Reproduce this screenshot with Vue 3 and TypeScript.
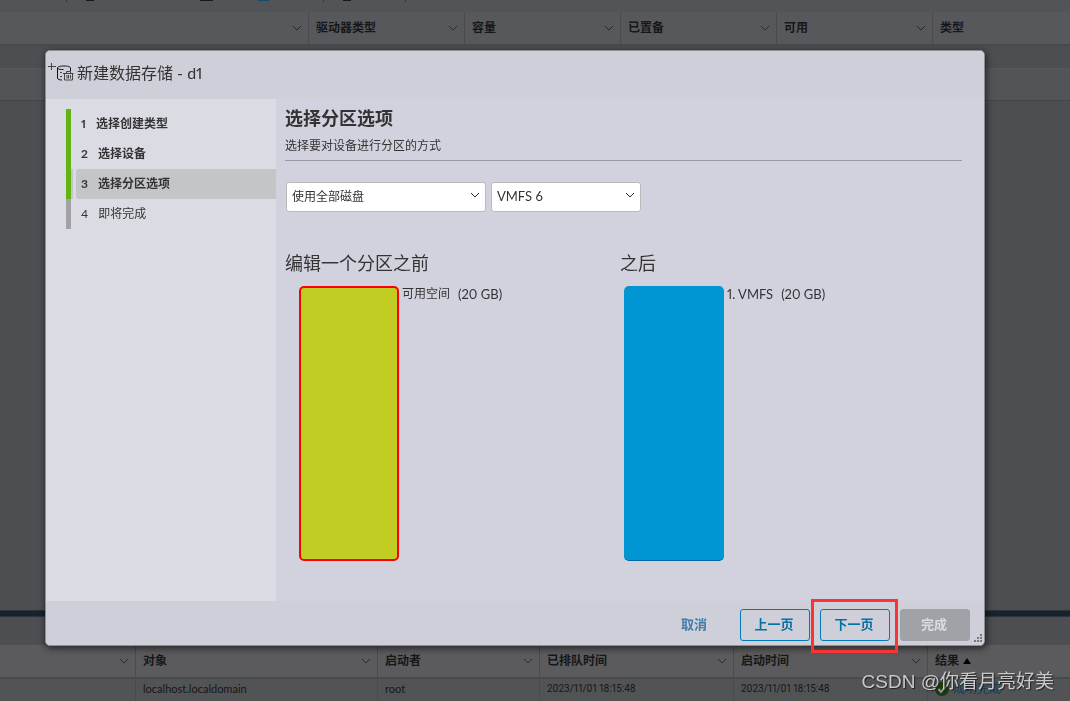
<script setup lang="ts">
import { ref } from 'vue'

interface Column {
  label: string
  width: string
}

interface Step {
  id: number
  label: string
  state: 'done' | 'current' | 'pending'
}

const storageColumns: Column[] = [
  { label: '', width: '309px' },
  { label: '驱动器类型', width: '156px' },
  { label: '容量', width: '156px' },
  { label: '已置备', width: '156px' },
  { label: '可用', width: '156px' },
  { label: '类型', width: 'auto' },
]

const taskColumns: Column[] = [
  { label: '', width: '136px' },
  { label: '对象', width: '242px' },
  { label: '启动者', width: '162px' },
  { label: '已排队时间', width: '194px' },
  { label: '启动时间', width: '194px' },
  { label: '结果', width: 'auto' },
]

const steps: Step[] = [
  { id: 1, label: '选择创建类型', state: 'done' },
  { id: 2, label: '选择设备', state: 'done' },
  { id: 3, label: '选择分区选项', state: 'current' },
  { id: 4, label: '即将完成', state: 'pending' },
]

const scheme = ref('full')
const version = ref('VMFS 6')
</script>

<template>
  <div class="page">
    <div class="toolbar-edge">
      <i class="sep"></i><i class="dot"></i><i class="dot wide"></i><i class="dot blue"></i><i class="sep"></i><i class="dot"></i><i class="sep"></i>
    </div>
    <table class="grid storage">
      <colgroup>
        <col v-for="(c, i) in storageColumns" :key="i" :style="{ width: c.width }" />
      </colgroup>
      <thead>
        <tr>
          <th v-for="(c, i) in storageColumns" :key="i" scope="col">
            <div class="head">
              <span>{{ c.label }}</span>
              <svg v-if="i < storageColumns.length - 1" class="chev" viewBox="0 0 10 6"><path d="M1 1l4 4 4-4" /></svg>
            </div>
          </th>
        </tr>
      </thead>
      <tbody>
        <tr class="filter"><td v-for="(c, i) in storageColumns" :key="i"></td></tr>
        <tr class="entry"><td v-for="(c, i) in storageColumns" :key="i"></td></tr>
      </tbody>
    </table>
    <div class="fill"></div>
    <div class="splitter"></div>
    <div class="task-bar"></div>
    <table class="grid tasks">
      <colgroup>
        <col v-for="(c, i) in taskColumns" :key="i" :style="{ width: c.width }" />
      </colgroup>
      <thead>
        <tr>
          <th v-for="(c, i) in taskColumns" :key="i" scope="col">
            <div class="head">
              <span>{{ c.label }}</span>
              <svg v-if="i < taskColumns.length - 1" class="chev" viewBox="0 0 10 6"><path d="M1 1l4 4 4-4" /></svg>
              <svg v-else class="sorted" viewBox="0 0 8 8"><path d="M4 1l4 6H0z" /></svg>
            </div>
          </th>
        </tr>
      </thead>
      <tbody>
        <tr>
          <td></td>
          <td>localhost.localdomain</td>
          <td>root</td>
          <td class="date">2023/11/01 18:15:48</td>
          <td class="date">2023/11/01 18:15:48</td>
          <td>
            <div class="result">
              <svg viewBox="0 0 14 14"><circle cx="7" cy="7" r="7" /><path d="M3.5 7l2.5 3 4.500-5.500" /></svg>
              <a href="#">成功完成</a>
            </div>
          </td>
        </tr>
      </tbody>
    </table>
  </div>

  <div class="overlay">
    <section class="dialog" role="dialog" aria-labelledby="dialog-title">
      <header class="title-bar">
        <svg class="store-icon" viewBox="0 0 26 20">
          <path d="M0 5.500h8M3.500 2v7" />
          <path class="dark" d="M22.500 10V7c0-1.500-3-2-6.500-2s-6.500.5-6.500 2v10c0 1.500 2 2 4.500 2M9.500 7c1 1.500 3 1.500 6 1.500" />
          <path d="M12 11.500h2M12 15.500h2" />
          <path d="M15 12.500h10.500M16.500 12.500v6.500h8v-6.500M19 14v3.500M20.500 14v3.500M22.500 14v3.500M18.500 12v-1.500h4V12" />
        </svg>
        <h1 id="dialog-title">新建数据存储 - d1</h1>
      </header>

      <div class="body">
        <nav class="steps">
          <ol>
            <li v-for="s in steps" :key="s.id" :class="s.state">
              <button type="button"><span class="num">{{ s.id }}</span>{{ s.label }}</button>
            </li>
          </ol>
        </nav>

        <main class="content">
          <h2>选择分区选项</h2>
          <p class="lead">选择要对设备进行分区的方式</p>
          <div class="choices">
            <div class="select wide">
              <select v-model="scheme" aria-label="分区方式">
                <option value="full">使用全部磁盘</option>
              </select>
              <svg class="chev" viewBox="0 0 10 6"><path d="M1 1l4 4 4-4" /></svg>
            </div>
            <div class="select">
              <select v-model="version" class="latin" aria-label="VMFS 版本">
                <option>VMFS 6</option>
              </select>
              <svg class="chev" viewBox="0 0 10 6"><path d="M1 1l4 4 4-4" /></svg>
            </div>
          </div>
          <div class="layouts">
            <section>
              <h3>编辑一个分区之前</h3>
              <div class="disk before">
                <div class="block free"></div>
                <span class="name">可用空间</span><span class="latin">(20 GB)</span>
              </div>
            </section>
            <section>
              <h3>之后</h3>
              <div class="disk">
                <div class="block vmfs"></div>
                <span class="name latin">1. VMFS</span><span class="latin">(20 GB)</span>
              </div>
            </section>
          </div>
        </main>
      </div>

      <footer class="actions">
        <button type="button" class="btn link">取消</button>
        <button type="button" class="btn">上一页</button>
        <div class="marked"><button type="button" class="btn">下一页</button></div>
        <button type="button" class="btn done" disabled>完成</button>
        <svg class="grip" viewBox="0 0 8 8">
          <path d="M6 0h2v2H6zM3 3h2v2H3zM6 3h2v2H6zM0 6h2v2H0zM3 6h2v2H3zM6 6h2v2H6z" />
        </svg>
      </footer>
    </section>
  </div>

  <div class="watermark">CSDN @你看月亮好美</div>
</template>

<style>
body {
  margin: 0;
  overflow: hidden;
}
</style>

<style scoped>
.page,
.overlay,
.watermark,
button,
select {
  font-family: Lato, "Noto Sans CJK SC", sans-serif;
  font-variant-numeric: proportional-nums;
}
.page {
  display: flex;
  flex-direction: column;
  height: 100vh;
  background: #4d4e52;
  color: #161718;
  font-size: 12px;
}
.toolbar-edge {
  display: flex;
  align-items: flex-start;
  height: 12px;
  padding-left: 66px;
  background: #535458;
}
.sep {
  width: 1px;
  height: 2px;
  background: #37383a;
}
.dot {
  width: 8px;
  height: 1px;
  margin: 0 54px 0 19px;
  background: #18191a;
}
.dot.wide {
  width: 13px;
  margin-left: 52px;
  margin-right: 26px;
}
.dot.blue {
  width: 11px;
  background: #164c68;
}
.grid {
  width: 100%;
  table-layout: fixed;
  border-collapse: separate;
  border-spacing: 0;
}
th,
td {
  box-sizing: border-box;
  padding: 0 6px 0 7px;
  border-right: 1px solid #4a4b4d;
  text-align: left;
}
th:last-child,
td:last-child {
  border-right: 0;
}
th {
  height: 34px;
  background: #57585b;
  border-bottom: 2px solid #494a4d;
  font-weight: 700;
}
.head {
  display: flex;
  align-items: center;
  justify-content: space-between;
  line-height: 18px;
}
.chev {
  width: 10px;
  height: 6px;
  fill: none;
  stroke: #2a2b2c;
}
.filter td {
  height: 22px;
}
.entry td {
  height: 33px;
  border-right-color: transparent;
  border-top: 1px solid #57585b;
  border-bottom: 1px solid #444548;
  background: #535458;
}
.fill {
  flex: 1;
}
.splitter {
  height: 5px;
  border-top: 1px solid #2d3336;
  border-bottom: 1px solid #2d3336;
  background: #15242c;
}
.task-bar {
  height: 28px;
}
.tasks th {
  background: #5b5b5d;
}
.tasks th:last-child .head {
  justify-content: flex-start;
  gap: 4px;
}
.sorted {
  width: 8px;
  height: 8px;
}
.tasks td {
  height: 22px;
  padding-bottom: 3px;
  background: #525355;
  font-size: 11px;
  line-height: 18px;
}
.tasks .date {
  font-family: Roboto, sans-serif;
  font-size: 10px;
}
.result {
  display: flex;
  align-items: center;
  gap: 4px;
}
.result svg {
  width: 14px;
  height: 14px;
  fill: #173b0c;
}
.result path {
  fill: none;
  stroke: #8b928a;
  stroke-width: 2;
}
.result a {
  color: #143f58;
  font-size: 12px;
  text-decoration: none;
}

.overlay {
  position: fixed;
  inset: 0;
  display: flex;
  box-sizing: border-box;
  padding: 50px 85px 55px 45px;
  color: #333;
  font-size: 12px;
}
.dialog {
  display: flex;
  flex: 1;
  flex-direction: column;
  border: 1px solid #8e8e92;
  border-radius: 5px;
  background: #d2d2de;
  box-shadow: 1px 2px 6px 1px rgba(0, 0, 0, 0.5);
}
.title-bar {
  display: flex;
  align-items: flex-start;
  gap: 5px;
  height: 38px;
  padding: 10px 0 0 2px;
  border-radius: 4px 4px 0 0;
  background: #cfcfd9;
}
.store-icon {
  width: 26px;
  height: 20px;
  fill: none;
  stroke: #444;
}
.store-icon .dark {
  stroke: #111;
}
h1 {
  margin: 0;
  margin-left: -2px;
  font-size: 16px;
  font-weight: 400;
  line-height: 24px;
}
.body {
  display: flex;
  flex: 1;
}
.steps {
  box-sizing: border-box;
  width: 230px;
  padding: 10px 0 0 20px;
  background: #dbdbe4;
}
.steps ol {
  margin: 0;
  padding: 0;
  list-style: none;
}
.steps li {
  height: 30px;
  padding-left: 5px;
  border-left: 5px solid #60b515;
}
.steps li.pending {
  border-left-color: #a2a2a6;
}
.steps li.current {
  padding-left: 3px;
  background: linear-gradient(to right, #c4c5c9 2px, transparent 2px);
}
.steps button {
  display: block;
  width: 100%;
  height: 30px;
  padding: 0 5px 3px;
  border: 0;
  border-radius: 3px 0 0 3px;
  background: transparent;
  color: #333;
  font-size: 12px;
  font-weight: 700;
  text-align: left;
}
.steps .current button {
  width: 200px;
  margin-left: 2px;
  background: #c4c5c9;
}
.steps .pending button {
  font-weight: 400;
}
.num {
  display: inline-block;
  margin-right: 10px;
}
.content {
  flex: 1;
  padding: 6px 22px 0 9px;
}
h2 {
  margin: 0;
  font-size: 18px;
  font-weight: 700;
  line-height: 26px;
}
.lead {
  margin: 0;
  padding: 6px 0 5px;
  border-bottom: 1px solid #9a9aa8;
  line-height: 18px;
}
.choices {
  display: flex;
  gap: 5px;
  margin: 21px 0 38px 1px;
}
.select {
  position: relative;
  width: 150px;
}
.select.wide {
  width: 200px;
}
select {
  box-sizing: border-box;
  width: 100%;
  height: 30px;
  padding: 0 20px 2px 5px;
  border: 1px solid #bbb;
  border-radius: 3px;
  appearance: none;
  background: #fff;
  color: #333;
  font-size: 12px;
}
.latin {
  font-size: 13px;
}
.select .chev {
  position: absolute;
  top: 10px;
  right: 6px;
}
.layouts {
  display: grid;
  grid-template-columns: 1fr 1fr;
  margin-right: 7px;
}
h3 {
  margin: 0 0 10px;
  font-size: 18px;
  font-weight: 400;
  line-height: 26px;
}
.disk {
  display: flex;
  gap: 3px;
  margin-left: 4px;
  line-height: 16px;
}
.disk.before {
  margin-left: 14px;
}
.name {
  margin-right: 5px;
}
.block {
  box-sizing: border-box;
  width: 100px;
  height: 275px;
  border-radius: 5px;
}
.free {
  border: 2px solid #f00;
  background: #c1cd23;
}
.vmfs {
  border-bottom: 1px solid #0068a5;
  background: #0095d3;
}
.actions {
  display: flex;
  align-items: center;
  gap: 10px;
  box-sizing: border-box;
  height: 44px;
  padding: 4px 2px 0 0;
  justify-content: flex-end;
  border-radius: 0 0 4px 4px;
  background: #cfcfd9;
}
.btn {
  box-sizing: border-box;
  width: 70px;
  height: 32px;
  padding: 0 2px 3px 0;
  border: 1px solid #0079b8;
  border-radius: 3px;
  background: transparent;
  color: #0072a3;
  font-size: 13px;
  font-weight: 700;
}
.btn.link {
  border-color: transparent;
  color: #3f7ca8;
}
.btn.done {
  margin-right: -6px;
  border-color: #a1a2a7;
  background: #a1a2a7;
  color: #dcdce0;
}
.marked {
  position: relative;
}
.marked::after {
  position: absolute;
  inset: -10px -8px -12px -9px;
  border: 3px solid #f93434;
  content: "";
  pointer-events: none;
}
.grip {
  align-self: flex-end;
  width: 8px;
  height: 8px;
  margin-bottom: 3px;
  fill: #777780;
}
.watermark {
  position: fixed;
  right: 16px;
  bottom: 5px;
  color: #c9c9cb;
  font-family: "Liberation Sans", "Noto Sans CJK SC", sans-serif;
  font-size: 19px;
  line-height: 28px;
  text-shadow: 1px 1px 1px #222;
}
</style>
